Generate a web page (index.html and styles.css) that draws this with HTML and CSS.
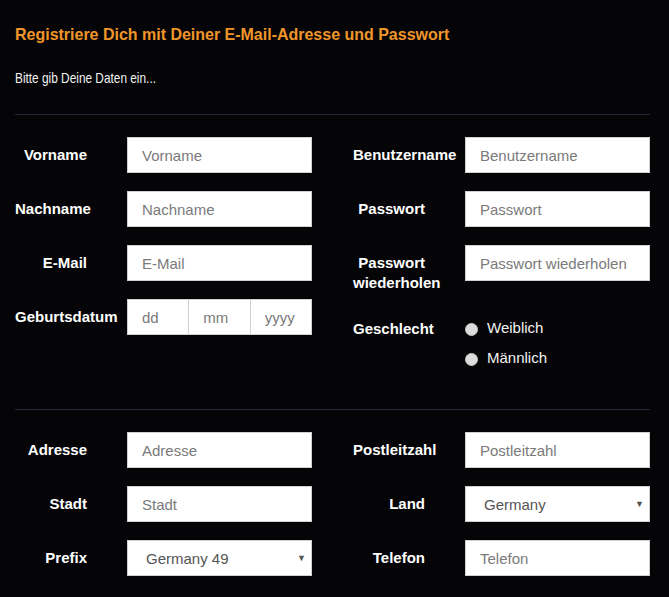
FILE: index.html
```html
<!DOCTYPE html>
<html>
<head>
    <title>Registrieren</title>
    <link rel="stylesheet" href="styles.css">
</head>
<body>
    <div class="page">
        <h1><span class="narrow">Registriere Dich mit Deiner E-Mail-Adresse und Passwort</span></h1>
        <p class="intro"><span class="narrow">Bitte gib Deine Daten ein...</span></p>

        <hr class="divider">

        <div class="section">
            <div class="col">
                <div class="field">
                    <label>Vorname</label>
                    <input type="text" placeholder="Vorname">
                </div>
                <div class="field">
                    <label>Nachname</label>
                    <input type="text" placeholder="Nachname">
                </div>
                <div class="field">
                    <label>E-Mail</label>
                    <input type="text" placeholder="E-Mail">
                </div>
                <div class="field">
                    <label>Geburtsdatum</label>
                    <div class="date">
                        <input type="text" placeholder="dd">
                        <input type="text" placeholder="mm">
                        <input type="text" placeholder="yyyy">
                    </div>
                </div>
            </div>
            <div class="col">
                <div class="field">
                    <label>Benutzername</label>
                    <input type="text" placeholder="Benutzername">
                </div>
                <div class="field">
                    <label>Passwort</label>
                    <input type="password" placeholder="Passwort">
                </div>
                <div class="field">
                    <label>Passwort wiederholen</label>
                    <input type="password" placeholder="Passwort wiederholen">
                </div>
                <div class="field">
                    <label>Geschlecht</label>
                    <div class="radios">
                        <label class="option"><input type="radio" name="gender"> Weiblich</label>
                        <label class="option"><input type="radio" name="gender"> Männlich</label>
                    </div>
                </div>
            </div>
        </div>

        <hr class="divider">

        <div class="section">
            <div class="col">
                <div class="field">
                    <label>Adresse</label>
                    <input type="text" placeholder="Adresse">
                </div>
                <div class="field">
                    <label>Stadt</label>
                    <input type="text" placeholder="Stadt">
                </div>
                <div class="field">
                    <label>Prefix</label>
                    <div class="select">
                        <select>
                            <option>Germany 49</option>
                            <option>Austria 43</option>
                            <option>Switzerland 41</option>
                        </select>
                    </div>
                </div>
            </div>
            <div class="col">
                <div class="field">
                    <label>Postleitzahl</label>
                    <input type="text" placeholder="Postleitzahl">
                </div>
                <div class="field">
                    <label>Land</label>
                    <div class="select">
                        <select>
                            <option>Germany</option>
                            <option>Austria</option>
                            <option>Switzerland</option>
                        </select>
                    </div>
                </div>
                <div class="field">
                    <label>Telefon</label>
                    <input type="text" placeholder="Telefon">
                </div>
            </div>
        </div>
    </div>
</body>
</html>
```

FILE: styles.css
```css
body {
    margin: 0;
    background-color: #050507;
    color: #fff;
    font-family: "Liberation Sans", Arial, sans-serif;
}
.page {
    padding: 24px 19px 0 15px;
}
.narrow {
    display: inline-block;
    transform-origin: left center;
    white-space: nowrap;
}
h1 {
    margin: 0;
    font-size: 17px;
    line-height: 22px;
    font-weight: bold;
    color: #f0952a;
}
h1 .narrow {
    transform: scaleX(0.94);
}
.intro {
    margin: 22px 0 0;
    font-size: 15px;
    line-height: 20px;
    color: #f2f2f2;
}
.intro .narrow {
    transform: scaleX(0.79);
}
.divider {
    margin: 26px 0 22px;
    border: 0;
    border-top: 1px solid #26263a;
}
.section + .divider {
    margin-top: 23px;
}
.section {
    display: grid;
    grid-template-columns: 297px 297px;
    column-gap: 41px;
    align-items: start;
}
.field {
    display: flex;
    align-items: flex-start;
    margin-bottom: 18px;
}
.field > label {
    flex: 0 0 72px;
    width: 72px;
    margin-right: 40px;
    padding-top: 8px;
    text-align: right;
    font-size: 15px;
    line-height: 20px;
    font-weight: bold;
    color: #fff;
}
input[type=text],
input[type=password],
select {
    box-sizing: border-box;
    width: 185px;
    height: 36px;
    margin: 0;
    padding: 0 14px;
    border: 1px solid #d0d0d0;
    border-radius: 0;
    background-color: #fff;
    font-family: "Liberation Sans", Arial, sans-serif;
    font-size: 15px;
    color: #555;
    outline: none;
}
::placeholder {
    color: #7a7a7a;
}
.date {
    display: flex;
    width: 185px;
}
.date input[type=text] {
    flex: 1;
    width: 0;
    min-width: 0;
}
.date input + input {
    border-left: 0;
}
.select {
    position: relative;
    width: 185px;
}
.select select {
    -webkit-appearance: none;
    appearance: none;
    padding-left: 18px;
}
.select::after {
    content: "\25BC";
    position: absolute;
    right: 6px;
    top: 13px;
    font-size: 9px;
    line-height: 10px;
    color: #555;
    pointer-events: none;
}
.radios {
    display: flex;
    flex-direction: column;
    gap: 10px;
    padding-top: 7px;
}
.option {
    display: flex;
    align-items: center;
    font-size: 15px;
    line-height: 20px;
    color: #f2f2f2;
}
.option input {
    -webkit-appearance: none;
    appearance: none;
    width: 13px;
    height: 13px;
    margin: 2px 9px 0 0;
    border-radius: 50%;
    background-color: #dcdcdc;
    border: 1px solid #c8c8c8;
    box-sizing: border-box;
}
```
